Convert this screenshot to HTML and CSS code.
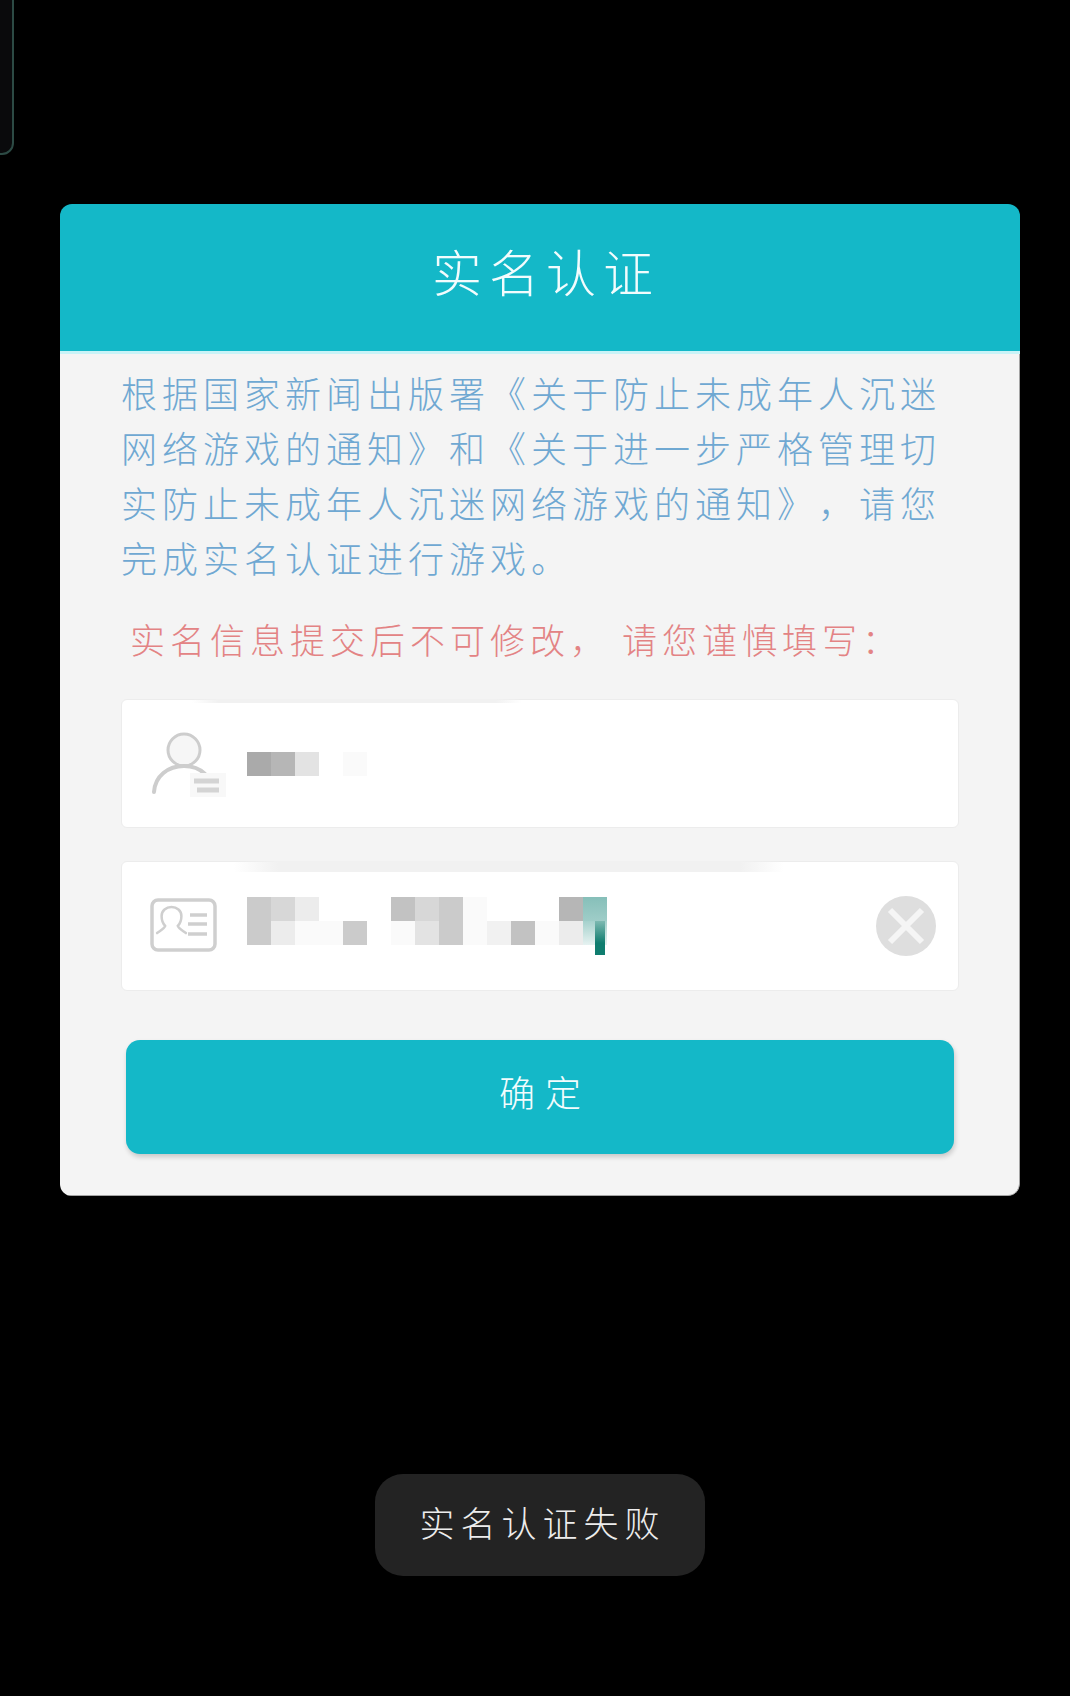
FILE: index.html
```html
<!DOCTYPE html>
<html lang="zh-CN">
<head>
<meta charset="utf-8">
<title>实名认证</title>
<link rel="stylesheet" href="styles.css">
</head>
<body>
<div class="corner-fragment"></div>
<main class="stage">
  <section class="card">
    <header class="card-header"><h1 class="title">实名认证</h1></header>
    <div class="card-body">
      <p class="notice">根据国家新闻出版署《关于防止未成年人沉迷网络游戏的通知》和《关于进一步严格管理切实防止未成年人沉迷网络游戏的通知》&#65292;请您完成实名认证进行游戏。</p>
      <p class="warning">实名信息提交后不可修改<span class="wide-comma">&#65292;</span>请您谨慎填写&#65306;</p>
      <div class="field field-name">
        <div class="smudge smudge-name"></div>
        <svg class="field-icon" viewBox="0 0 80 80" aria-hidden="true">
          <circle cx="36" cy="26" r="16" fill="#f6f6f6" stroke="#cdcdcd" stroke-width="3"/>
          <path d="M6 68c1-16 14-26 30-26 9 0 16 3 21 8" fill="none" stroke="#cdcdcd" stroke-width="4" stroke-linecap="round"/>
          <rect x="42" y="49" width="36" height="24" fill="#f8f8f8"/>
          <path d="M46 57h25M49 66h22" stroke="#d4d4d4" stroke-width="5"/>
        </svg>
        <div class="mosaic">
          <div class="mosaic-row">
            <i class="cell g-a"></i><i class="cell g-b"></i><i class="cell g-e"></i><i class="cell"></i><i class="cell g-h"></i>
          </div>
        </div>
      </div>
      <div class="field field-id">
        <div class="smudge smudge-id"></div>
        <svg class="field-icon" viewBox="0 0 80 80" aria-hidden="true">
          <rect x="4" y="14" width="63" height="50" rx="6" fill="none" stroke="#cfcfcf" stroke-width="3.5"/>
          <path d="M18 41c-3-3-4-7-4-11 0-6 5-10 11-10s11 4 11 10c0 4-1 8-4 11 1 3 5 5 9 8M18 41c-1 3-5 5-9 8" transform="translate(1 3) scale(.9)" fill="none" stroke="#cfcfcf" stroke-width="2.8" stroke-linecap="round"/>
          <path d="M42 29h17M40 38h19M40 48h19" stroke="#cfcfcf" stroke-width="3.5"/>
        </svg>
        <div class="mosaic mosaic-id">
          <div class="mosaic-row">
            <i class="cell g-c"></i><i class="cell g-d"></i><i class="cell g-f"></i><i class="cell"></i><i class="cell"></i><i class="cell"></i><i class="cell g-b2"></i><i class="cell g-d"></i><i class="cell g-c"></i><i class="cell g-h"></i><i class="cell"></i><i class="cell"></i><i class="cell"></i><i class="cell g-b"></i><i class="cell teal-top"></i>
          </div>
          <div class="mosaic-row">
            <i class="cell g-c"></i><i class="cell g-f"></i><i class="cell g-h"></i><i class="cell g-h"></i><i class="cell g-c"></i><i class="cell"></i><i class="cell g-h"></i><i class="cell g-e"></i><i class="cell g-c"></i><i class="cell g-h"></i><i class="cell g-g"></i><i class="cell g-b2"></i><i class="cell g-h"></i><i class="cell g-f"></i><i class="cell teal-bottom"></i>
          </div>
          <div class="caret"></div>
        </div>
        <svg class="clear" viewBox="0 0 60 60" aria-hidden="true">
          <circle cx="30" cy="30" r="30" fill="#dedede"/>
          <path d="M14 14l32 32M46 14L14 46" stroke="#f5f5f5" stroke-width="6"/>
        </svg>
      </div>
      <button class="confirm" type="button">确定</button>
    </div>
  </section>
  <div class="toast">实名认证失败</div>
</main>
</body>
</html>
```
FILE: styles.css
```css
* { box-sizing: border-box; }
html, body { margin: 0; background: #000; }
body {
  position: relative;
  height: 1696px;
  overflow: hidden;
  font-family: "Noto Sans CJK SC", "Noto Sans", sans-serif;
  font-weight: 300;
  text-spacing-trim: space-all;
  font-kerning: none;
}
.corner-fragment {
  position: absolute;
  left: -20px;
  top: -40px;
  width: 34px;
  height: 195px;
  background: #0a0a0c;
  border: 2px solid #2c4a44;
  border-radius: 12px;
}
.stage {
  display: flex;
  flex-direction: column;
  align-items: center;
  padding: 204px 0 0 10px;
}
.card {
  display: flex;
  flex-direction: column;
  width: 960px;
  height: 992px;
  border-radius: 12px;
  overflow: hidden;
}
.card-header {
  flex: none;
  height: 150px;
  padding-bottom: 15px;
  background: #14b8c8;
  border-bottom: 3px solid #c9f3f7;
  display: flex;
  align-items: center;
  justify-content: center;
}
.title {
  margin: 0;
  padding-left: 12px;
  font-size: 50px;
  font-weight: 300;
  letter-spacing: 7px;
  line-height: 1;
  color: #f2fcfd;
}
.card-body {
  flex: 1;
  padding: 11px 60px 0 61px;
  background: #f4f4f4;
  border-right: 1.5px solid #a4a4a4;
  border-bottom: 1.5px solid #a4a4a4;
  border-bottom-right-radius: 12px;
}
.notice {
  margin: 0;
  width: 826px;
  font-size: 36px;
  line-height: 55px;
  letter-spacing: 5px;
  color: #6fa8d2;
}
.warning {
  margin: 27px 0 0 9px;
  font-size: 35px;
  line-height: 54px;
  letter-spacing: 5px;
  white-space: nowrap;
  color: #e38384;
}
.wide-comma { margin-right: 12px; }
.field {
  position: relative;
  display: flex;
  align-items: center;
  width: 838px;
  height: 129px;
  padding: 0 22px 0 26px;
  background: #fff;
  border: 1px solid #ececec;
  border-radius: 6px;
}
.field-name { margin-top: 33px; }
.field-id { height: 130px; margin-top: 33px; }
.field-icon {
  flex: none;
  width: 80px;
  height: 80px;
}
.smudge {
  position: absolute;
  top: -1px;
  background: linear-gradient(90deg, #f4f4f400, #f1f1f1 8%, #f1f1f1 92%, #f4f4f400);
}
.smudge-name { left: 70px; width: 330px; height: 4px; }
.smudge-id { left: 112px; width: 550px; height: 11px; }
.mosaic {
  position: relative;
  margin-left: 19px;
}
.mosaic-id { height: 58px; }
.mosaic-row { display: flex; }
.cell {
  flex: none;
  display: block;
  width: 24px;
  height: 24px;
}
.g-a { background: #aaa; }
.g-b { background: #b6b6b6; }
.g-b2 { background: #c2c2c2; }
.g-c { background: #cbcbcb; }
.g-d { background: #d7d7d7; }
.g-e { background: #e3e3e3; }
.g-f { background: #ececec; }
.g-g { background: #f1f1f1; }
.g-h { background: #fafafa; }
.teal-top { background: linear-gradient(#86bfb9, #9fcdc8); }
.teal-bottom { background: linear-gradient(#a5d1cc, #e6f2f1); }
.caret {
  position: absolute;
  left: 348px;
  top: 24px;
  width: 10px;
  height: 34px;
  background: linear-gradient(#7db9b1, #0f7d6f 65%);
}
.clear {
  flex: none;
  width: 60px;
  height: 60px;
  margin-left: auto;
}
.confirm {
  display: block;
  width: 828px;
  height: 114px;
  margin: 49px 0 0 5px;
  padding: 0 0 12px 10px;
  border: 0;
  border-radius: 14px;
  background: #14b8c8;
  box-shadow: 1px 3px 5px rgba(0, 0, 0, .18);
  color: #f2fcfd;
  font: inherit;
  font-size: 36px;
  letter-spacing: 10px;
  line-height: 1;
}
.toast {
  width: 330px;
  height: 102px;
  margin-top: 278px;
  padding-left: 5px;
  border-radius: 28px;
  background: #232323;
  color: #ededed;
  font-size: 35px;
  letter-spacing: 6px;
  line-height: 96px;
  text-align: center;
}
```
